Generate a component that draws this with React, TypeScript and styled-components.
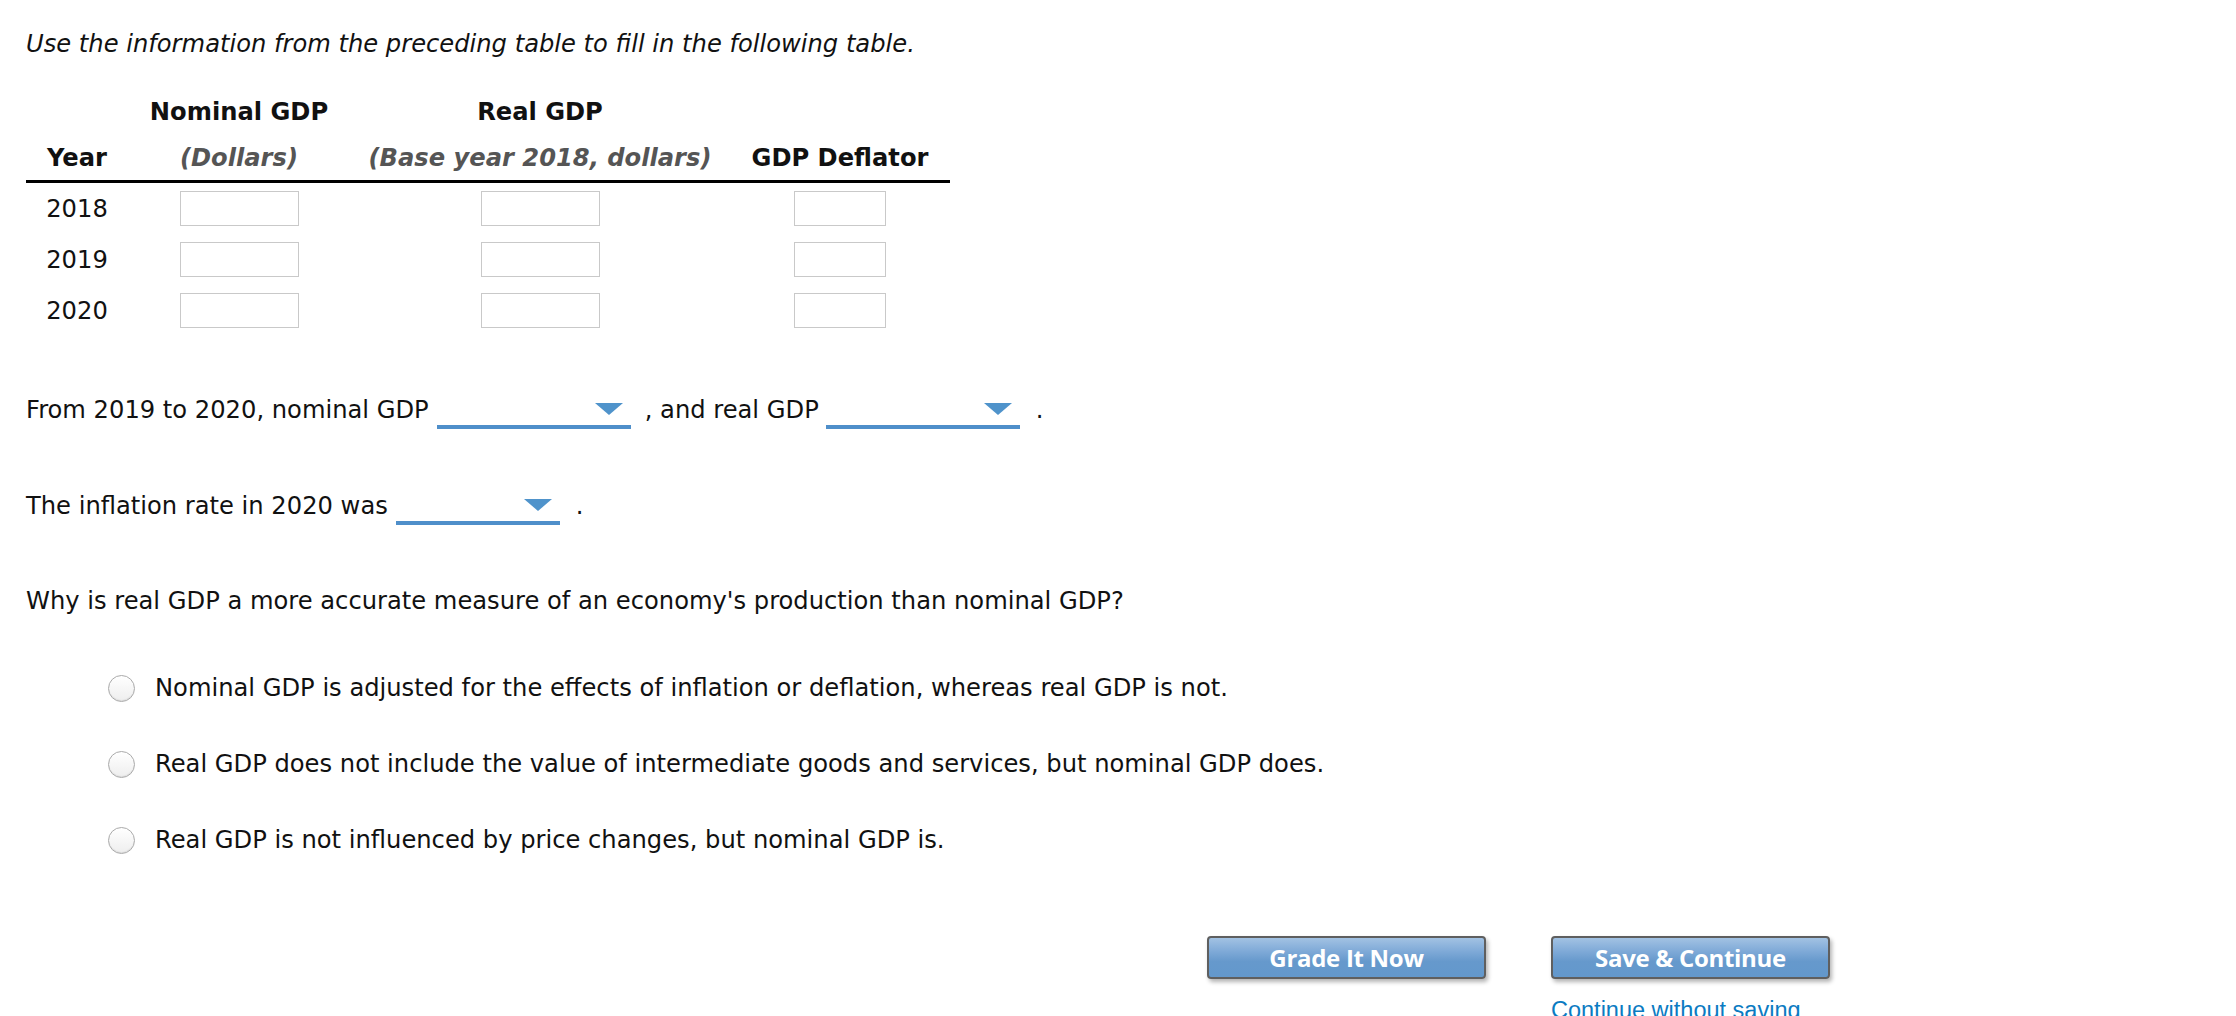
import styled, { createGlobalStyle } from "styled-components";

const GlobalStyle = createGlobalStyle`
  html, body {
    margin: 0;
    padding: 0;
    background: #fff;
  }
  body {
    font-family: "DejaVu Sans", Verdana, sans-serif;
    font-size: 24.2px;
    color: #111;
    overflow: hidden;
  }
`;

const Page = styled.div`
  width: 1830px;
  padding-left: 26px;
  box-sizing: border-box;
`;

const Instruction = styled.p`
  margin: 29px 0 0;
  line-height: 30px;
  font-style: italic;
`;

const Table = styled.div`
  margin-top: 30px;
  width: 924px;
  display: grid;
  grid-template-columns: 102px 222px 380px 220px;
`;

const HeadCell = styled.div<{ $muted?: boolean; $last?: boolean }>`
  height: ${(p) => (p.$last ? "45px" : "46px")};
  display: flex;
  align-items: center;
  justify-content: center;
  font-weight: bold;
  font-style: ${(p) => (p.$muted ? "italic" : "normal")};
  color: ${(p) => (p.$muted ? "#555" : "#111")};
  border-bottom: ${(p) => (p.$last ? "3px solid #000" : "none")};
  white-space: nowrap;
`;

const Cell = styled.div`
  height: 51px;
  display: flex;
  align-items: center;
  justify-content: center;
`;

const Input = styled.input<{ $narrow?: boolean }>`
  width: ${(p) => (p.$narrow ? "92px" : "119px")};
  height: 35px;
  box-sizing: border-box;
  border: 1.5px solid #c9c9c9;
  background: #fff;
  outline: none;
  padding: 0 4px;
  font: inherit;
`;

const Sentence = styled.div<{ $top: number }>`
  margin-top: ${(p) => p.$top}px;
  height: 39px;
  display: flex;
  line-height: 40px;
  white-space: nowrap;
`;

const Dropdown = styled.div<{ $w: number; $ml: number; $mr: number }>`
  width: ${(p) => p.$w}px;
  margin: 0 ${(p) => p.$mr}px 0 ${(p) => p.$ml}px;
  box-sizing: border-box;
  border-bottom: 4.5px solid #4f8fca;
  display: flex;
  justify-content: flex-end;
  align-items: flex-start;
  padding: 13px 8px 0 0;
`;

const Arrow = styled.svg`
  width: 28px;
  height: 12px;
  display: block;
`;

const Question = styled.p`
  margin: 56px 0 0;
  line-height: 40px;
`;

const Options = styled.div`
  margin-top: 47px;
  padding-left: 82px;
  display: flex;
  flex-direction: column;
  gap: 36px;
`;

const Option = styled.label`
  height: 40px;
  display: flex;
  align-items: center;
  gap: 20px;
  white-space: nowrap;
`;

const Radio = styled.span`
  width: 27px;
  height: 27px;
  box-sizing: border-box;
  border-radius: 50%;
  border: 1.5px solid #aaaaaa;
  background: linear-gradient(#ffffff, #eeeeee);
  box-shadow: inset 0 -1px 1px rgba(0, 0, 0, 0.08);
  flex-shrink: 0;
`;

const Footer = styled.div`
  margin-top: 76px;
  display: flex;
  justify-content: flex-end;
  align-items: flex-start;
  gap: 65px;
`;

const Column = styled.div`
  display: flex;
  flex-direction: column;
`;

const Button = styled.button`
  width: 279px;
  height: 43px;
  box-sizing: border-box;
  border: 2px solid #5f5f5f;
  border-radius: 4px;
  background: linear-gradient(#a2c2e3 0%, #7ea9d7 35%, #6699cc 60%, #6398cc 100%);
  box-shadow: 2px 3px 4px rgba(0, 0, 0, 0.3);
  color: #fff;
  font-family: "Open Sans", "Noto Sans", sans-serif;
  font-weight: 700;
  font-size: 24px;
  letter-spacing: -0.3px;
  padding: 0;
  cursor: pointer;
`;

const Link = styled.a`
  margin-top: 18px;
  line-height: 26px;
  font-family: "Liberation Sans", Arial, sans-serif;
  font-size: 23.5px;
  color: #0b7bc2;
  text-decoration: none;
  white-space: nowrap;
`;

function Select({ w, ml, mr }: { w: number; ml: number; mr: number }) {
  return (
    <Dropdown $w={w} $ml={ml} $mr={mr}>
      <Arrow viewBox="0 0 28 12">
        <polygon points="0,0 28,0 14,12" fill="#4f93cb" />
      </Arrow>
    </Dropdown>
  );
}

const years = ["2018", "2019", "2020"];

const answers = [
  "Nominal GDP is adjusted for the effects of inflation or deflation, whereas real GDP is not.",
  "Real GDP does not include the value of intermediate goods and services, but nominal GDP does.",
  "Real GDP is not influenced by price changes, but nominal GDP is.",
];

export default function App() {
  return (
    <>
      <GlobalStyle />
      <Page>
        <Instruction>Use the information from the preceding table to fill in the following table.</Instruction>

        <Table>
          <HeadCell />
          <HeadCell>Nominal GDP</HeadCell>
          <HeadCell>Real GDP</HeadCell>
          <HeadCell />
          <HeadCell $last>Year</HeadCell>
          <HeadCell $last $muted>(Dollars)</HeadCell>
          <HeadCell $last $muted>(Base year 2018, dollars)</HeadCell>
          <HeadCell $last>GDP Deflator</HeadCell>
          {years.map((y) => (
            <>
              <Cell key={y}>{y}</Cell>
              <Cell>
                <Input />
              </Cell>
              <Cell>
                <Input />
              </Cell>
              <Cell>
                <Input $narrow />
              </Cell>
            </>
          ))}
        </Table>

        <Sentence $top={54}>
          From 2019 to 2020, nominal GDP
          <Select w={194} ml={8} mr={14} />
          , and real GDP
          <Select w={194} ml={7} mr={16} />.
        </Sentence>

        <Sentence $top={57}>
          The inflation rate in 2020 was
          <Select w={164} ml={8} mr={16} />.
        </Sentence>

        <Question>Why is real GDP a more accurate measure of an economy's production than nominal GDP?</Question>

        <Options>
          {answers.map((a) => (
            <Option key={a}>
              <Radio />
              {a}
            </Option>
          ))}
        </Options>

        <Footer>
          <Button>Grade It Now</Button>
          <Column>
            <Button>Save &amp; Continue</Button>
            <Link href="#">Continue without saving</Link>
          </Column>
        </Footer>
      </Page>
    </>
  );
}
